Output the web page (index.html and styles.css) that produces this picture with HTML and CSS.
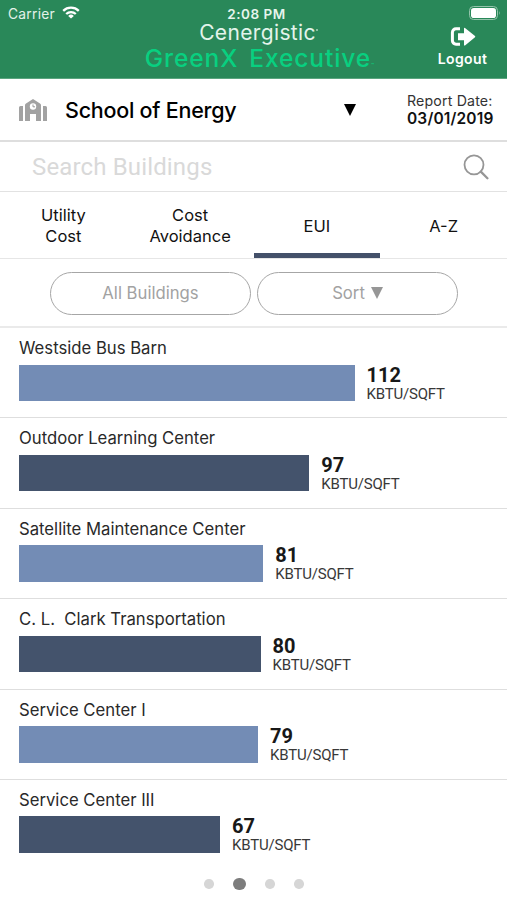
FILE: index.html
```html
<!DOCTYPE html>
<html lang="en">
<head>
<meta charset="utf-8">
<title>GreenX Executive</title>
<link rel="stylesheet" href="styles.css">
</head>
<body>
<header class="header">
  <div class="carrier"><span>Carrier</span>
    <svg width="18" height="13" viewBox="0 0 18 13" fill="none" stroke="#fff" stroke-width="2.3"><path d="M1.2 4.8a11.2 11.2 0 0 1 15.6 0M4.2 8a6.9 6.9 0 0 1 9.6 0"/><path d="M9 12.6 6.2 9.9a4 4 0 0 1 5.6 0z" fill="#fff" stroke="none"/></svg>
  </div>
  <div class="brand">
    <div class="clock">2:08 PM</div>
    <div class="company"><span>Cenergistic</span><i class="mark"></i></div>
    <div class="product"><span>GreenX</span><span class="exec">Executive</span><small>™</small></div>
  </div>
  <div class="account">
    <svg width="32" height="14" viewBox="0 0 32 14"><rect x=".5" y=".5" width="28" height="13" rx="4" fill="none" stroke="#93c3aa"/><rect x="2" y="2" width="25" height="10" rx="2.8" fill="#fff"/><path d="M30 5q1.5 2 0 4z" fill="#93c3aa"/></svg>
    <svg class="exit" width="26" height="20" viewBox="0 0 26 20"><path d="M10 1.8H6A3.6 3.6 0 0 0 2.4 5.4v8.2A3.6 3.6 0 0 0 6 17.2h4" fill="none" stroke="#fff" stroke-width="3"/><path d="M8 6.2h6V1.4q0-1 1-.4l10 8q.6.6 0 1.2l-10 8.2q-1 .5-1-.4v-4.8H8z" fill="#fff"/></svg>
    <b>Logout</b>
  </div>
</header>
<section class="site">
  <svg width="28" height="24" viewBox="0 0 28 24"><path d="M0 9.5Q0 8 1.5 8H4v15H0zM24 8h2.5Q28 8 28 9.5V23h-4zM6 23V7q0-1 1-1.6L14 1l7 4.4q1 .6 1 1.6v16h-5v-7h-6v7z" fill="#a2a2a2"/><circle cx="14" cy="8.5" r="3.2" fill="#fff"/><path d="M14 6.5v2.3h2" fill="none" stroke="#999"/></svg>
  <h1><span>School of Energy</span></h1>
  <svg class="caret" width="12" height="12" viewBox="0 0 12 12"><path d="M0 0h12L6 12z"/></svg>
  <div class="report"><span class="rlabel">Report Date:</span><b>03/01/2019</b></div>
</section>
<section class="search">
  <span>Search Buildings</span>
  <svg width="26" height="26" viewBox="0 0 26 26" fill="none" stroke="#969696" stroke-width="1.8"><circle cx="11" cy="10.8" r="9.5"/><path d="m17.8 17.6 6.6 6.6" stroke-width="2.3" stroke-linecap="round"/></svg>
</section>
<nav class="tabs">
  <div>Utility<br>Cost</div><div>Cost<br>Avoidance</div><div class="active">EUI</div><div>A-Z</div>
</nav>
<section class="filters">
  <div class="pill"><span>All Buildings</span></div>
  <div class="pill"><span class="sort">Sort</span><svg width="12" height="12" viewBox="0 0 12 12"><path d="M0 0h12L6 12z" fill="#969696"/></svg></div>
</section>
<main>
  <article><h2>Westside Bus Barn</h2><div class="line"><div class="bar" style="width:335.5px"></div><p><b>112</b><span>KBTU/SQFT</span></p></div></article>
  <article><h2>Outdoor Learning Center</h2><div class="line"><div class="bar" style="width:290.3px"></div><p><b>97</b><span>KBTU/SQFT</span></p></div></article>
  <article><h2>Satellite Maintenance Center</h2><div class="line"><div class="bar" style="width:244.3px"></div><p><b>81</b><span>KBTU/SQFT</span></p></div></article>
  <article><h2>C. L.&nbsp; Clark Transportation</h2><div class="line"><div class="bar" style="width:241.5px"></div><p><b>80</b><span>KBTU/SQFT</span></p></div></article>
  <article><h2>Service Center I</h2><div class="line"><div class="bar" style="width:239px"></div><p><b>79</b><span>KBTU/SQFT</span></p></div></article>
  <article><h2>Service Center III</h2><div class="line"><div class="bar" style="width:201px"></div><p><b>67</b><span>KBTU/SQFT</span></p></div></article>
</main>
<footer class="dots"><i></i><i class="on"></i><i></i><i></i></footer>
</body>
</html>
```
FILE: styles.css
```css
* { box-sizing: border-box; }
body { margin: 0; width: 507px; height: 900px; overflow: hidden; background: #fff; color: #111; font-family: Inter, "Liberation Sans", sans-serif; display: flex; flex-direction: column; white-space: nowrap; }
h1, h2, p { margin: 0; font-weight: 400; }
svg { display: block; flex: none; }
.header { height: 79px; flex: none; background: #298859; border-bottom: 1px solid #5ba57f; color: #fff; display: grid; grid-template-columns: 130px 1fr 124px; }
.carrier { display: flex; gap: 7px; padding: 7px 0 0 8px; font-size: 13.8px; line-height: 14px; color: #e3f2e9; letter-spacing: .25px; }
.carrier svg { margin-top: -1px; }
.brand { display: flex; flex-direction: column; align-items: center; padding-top: 6px; }
.clock { font-size: 13.5px; line-height: 16px; font-weight: 600; color: #e6f4ec; letter-spacing: .5px; }
.company { height: 23px; line-height: 21px; font-size: 21px; color: #e3f4eb; letter-spacing: .35px; margin-left: 4px; display: flex; }
.mark { width: 2px; height: 2px; border-radius: 50%; background: #a6d2ba; margin-top: 7px; }
.product { display: flex; align-items: baseline; font-size: 24.5px; line-height: 27px; font-weight: 500; color: #08d080; margin-left: 6px; }
.product span { letter-spacing: .9px; }
.product .exec { margin-left: 11px; }
.product small { font-size: 5px; }
.account { display: flex; flex-direction: column; align-items: center; padding: 6px 0 0 35px; }
.account > svg:first-child { margin-left: 44px; }
.account .exit { margin-top: 7px; }
.account b { font-size: 14px; line-height: 18px; font-weight: 600; margin-top: 3px; letter-spacing: .4px; }
.site { height: 63px; flex: none; border-bottom: 2px solid #dedede; display: flex; align-items: center; padding-left: 19px; }
.site h1 { width: 278px; margin-left: 18px; margin-right: 1px; font-size: 21.5px; font-weight: 500; color: #000; letter-spacing: -.25px; }
.report { margin-left: 51px; font-size: 14.2px; line-height: 18px; color: #333; letter-spacing: .15px; }
.report span, .report b { display: block; }
.report b { color: #111; font-size: 15.5px; font-weight: 600; }
.search { height: 50px; flex: none; border-bottom: 1px solid #e2e2e2; display: flex; align-items: center; justify-content: space-between; padding: 0 18px 0 32px; color: #d9d9d9; font: 24px Roboto, sans-serif; letter-spacing: .15px; }
.tabs { height: 67px; flex: none; border-bottom: 1px solid #e6e6e6; display: grid; grid-template-columns: repeat(4, 1fr); font-size: 16.5px; line-height: 21px; text-align: center; }
.tabs div { display: flex; align-items: center; justify-content: center; padding-top: 2px; }
.tabs .active { box-shadow: inset 0 -5px #435069; }
.filters { height: 69px; flex: none; border-bottom: 2px solid #eaeaea; display: flex; gap: 6px; padding: 13px 0 0 50px; }
.pill { width: 201px; height: 43px; border: 1.5px solid #a6a6a6; border-radius: 22px; display: flex; align-items: center; justify-content: center; color: #a2a2a2; font-size: 16.7px; gap: 6px; padding-bottom: 1px; }
main { flex: none; }
article { height: 90.4px; border-bottom: 1px solid #dedede; padding: 9px 0 0 19px; }
article:last-child { border: 0; }
article h2 { font-size: 16.7px; line-height: 22px; color: #292929; margin-bottom: 5.5px; }
.line { display: flex; gap: 12px; height: 36.6px; }
.bar { background: #738cb5; }
article:nth-child(even) .bar { background: #44536c; }
.line p { font-family: Roboto, sans-serif; }
.line b, .line span { display: block; }
.line b { font-size: 20px; line-height: 20px; color: #181818; }
.line span { font-size: 15px; line-height: 19px; color: #383838; letter-spacing: -.2px; }
.dots { display: flex; align-items: center; gap: 19.5px; margin: 7.4px 0 0 204px; height: 13px; flex: none; }
.dots i { width: 9.5px; height: 9.5px; border-radius: 50%; background: #d6d6d6; }
.dots .on { width: 12.5px; height: 12.5px; background: #7d7d7d; }
```
